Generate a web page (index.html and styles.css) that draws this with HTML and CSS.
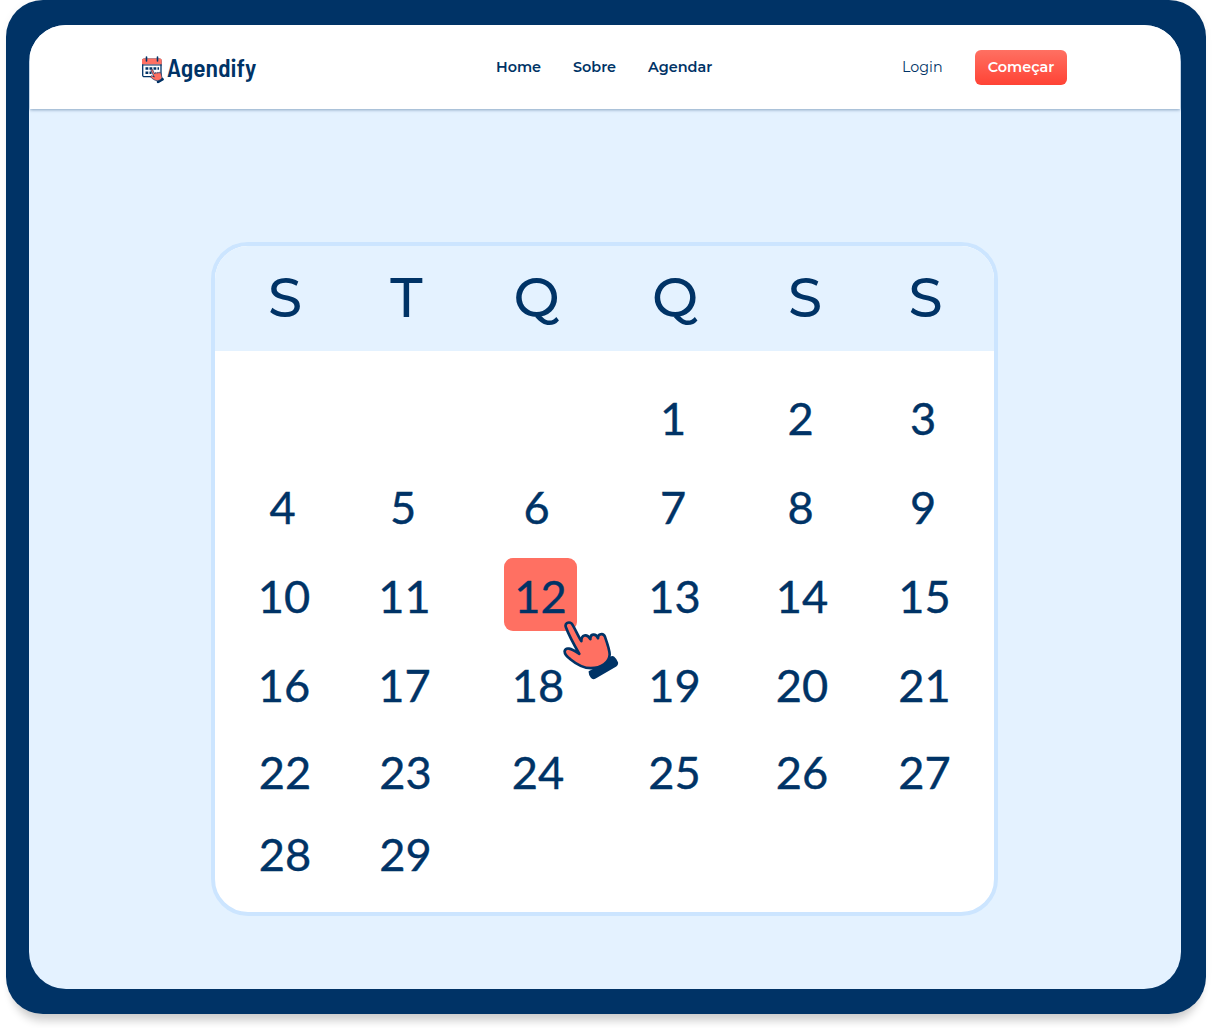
FILE: index.html
```html
<!DOCTYPE html>
<html lang="pt-BR">
<head>
<meta charset="utf-8">
<title>Agendify</title>
<link rel="stylesheet" href="styles.css">
</head>
<body>
<svg class="symbols" aria-hidden="true">
  <symbol id="hand" viewBox="220 228 168 176">
    <path d="M297 378Q333 362 361 335Q368 330 373 334Q381 341 385 351Q387 359 380 364L318 400Q309 405 303 397Q296 388 297 378Z" fill="#003366"/>
    <path d="M229 247C224 235 236 228 246 235C254 246 264 270 275 288C275 269 291 264 302 282C301 266 318 263 325 279C324 266 341 262 346 275C352 292 360 315 360 328C359 352 334 369 304 369C281 369 259 356 242 342C232 335 224 328 225 318C228 305 242 308 269 326C255 302 239 274 229 247Z" fill="#ff7062" stroke="#003366" stroke-width="8" stroke-linejoin="round"/>
  </symbol>
</svg>
<div class="frame">
  <div class="screen">
    <header class="topbar">
      <a class="brand">
        <svg class="brand-icon" viewBox="0 0 24 28">
          <rect x="1.7" y="3.2" width="18.3" height="17.5" rx="1.5" fill="#fff" stroke="#003366" stroke-width="1.3"/>
          <path d="M1 8.5V4Q1 2.5 2.5 2.5H19.2Q20.7 2.5 20.7 4V8.500Z" fill="#ff7062"/>
          <path d="M1 9H20.700" stroke="#003366"/>
          <path d="M5.500 1V5M16.500 1V5" stroke="#003366" stroke-width="1.600" stroke-linecap="round"/>
          <path d="M8.500 12.500H11.300M12.500 12.500H15.300M4.500 12.500H7.300M4.500 16.800H7.300M8.500 16.800H10.500M16.500 12.500H18" stroke="#003366" stroke-width="2.400"/>
          <use href="#hand" x="9" y="13" width="14.500" height="14.500"/>
        </svg>
        <span class="brand-name">Agendify</span>
      </a>
      <nav class="nav">
        <a class="home">Home</a><a class="about">Sobre</a><a class="book">Agendar</a>
      </nav>
      <div class="actions"><a class="login">Login</a><button class="start"><span>Começar</span></button></div>
    </header>
    <main class="content">
      <section class="calendar">
        <div class="weekdays"><span>S</span><span>T</span><span>Q</span><span>Q</span><span>S</span><span>S</span></div>
        <div class="days">
          <span></span><span></span><span></span><span class="single">1</span><span class="single">2</span><span class="single">3</span>
          <span class="single">4</span><span class="single">5</span><span class="single">6</span><span class="single">7</span><span class="single">8</span><span class="single">9</span>
          <span>10</span><span>11</span><span class="selected">12<svg class="pointer"><use href="#hand"/></svg></span><span>13</span><span>14</span><span>15</span>
          <span>16</span><span>17</span><span>18</span><span>19</span><span>20</span><span>21</span>
          <span class="late">22</span><span class="late">23</span><span>24</span><span>25</span><span>26</span><span>27</span>
          <span class="late">28</span><span class="late">29</span>
        </div>
      </section>
    </main>
  </div>
</div>
</body>
</html>
```
FILE: styles.css
```css
* { box-sizing: border-box; }
body { margin: 0; height: 1028px; overflow: hidden; background: #fff; color: #003366; font-family: Montserrat, Inter, sans-serif; }
.symbols { display: none; }
.frame { width: 1200px; height: 1014px; margin: 0 6px; padding: 25px 25px 25px 23px; border-radius: 37px; background: #003366; box-shadow: 0 13px 9px -6px rgba(0,0,0,.18), 0 0 8px rgba(0,0,0,.04); }
.screen { height: 964px; border-radius: 37px; overflow: hidden; background: #e4f2ff; }
.topbar { height: 84px; margin: 0 1px; display: flex; background: #fff; box-shadow: 0 1px 3px rgba(0,51,102,.4); }
.brand { display: flex; width: 466px; padding: 31px 0 0 111px; }
.brand-icon { width: 24px; height: 28px; flex: none; }
.brand-name { font: 600 25.4px/26px "Barlow Semi Condensed", Barlow, "Roboto Condensed", "Liberation Sans Narrow", sans-serif; margin: -2px 0 0 2px; height: 26px; }
.nav { width: 405px; display: flex; gap: 32px; padding-top: 33px; font-size: 14.4px; line-height: 18px; font-weight: 600; }
.home { width: 45px; }
.about { width: 43px; }
.book { width: 66px; }
.actions { display: flex; align-items: flex-start; padding-top: 25px; }
.login { width: 74px; padding: 8px 0 0 1px; font-size: 14.3px; line-height: 18px; font-weight: 400; }
.start { width: 92px; height: 35px; padding: 0; border: 0; border-radius: 6px; background: linear-gradient(#ff7062, #ff4335); color: #fff; font: 600 14.4px/35px Montserrat, Inter, sans-serif; }
.content { padding: 133px 0 0 182px; }
.calendar { width: 787px; height: 674px; border: 4px solid #cce5ff; border-radius: 37px; overflow: hidden; background: #fff; }
.weekdays, .days { display: grid; grid-template-columns: 120px 121px 146px 127px 128px 117px; text-align: center; }
.weekdays { grid-template-columns: 120px 123px 137px 140px 120px 121px; height: 105px; padding: 0 8px 0 10px; background: #e4f2ff; font: 500 55px/103px Montserrat, Lato, sans-serif; }
.days { padding: 22px 11px 0 9px; grid-template-rows: repeat(4, 89px) 85px 79px; font: 400 45.2px/89px Lato, sans-serif; -webkit-text-stroke: .4px #003366; }
.days > :nth-child(n+25) { line-height: 85px; }
.days > :nth-child(n+31) { line-height: 79px; }
.single { padding-right: 3px; }
.late { padding-left: 2px; }
.selected { position: relative; width: 73px; height: 73px; margin: 6.5px 0 0 39px; border-radius: 9px; background: #ff7062; line-height: 76px; }
.pointer { position: absolute; left: 59px; top: 63.5px; width: 56px; height: 59px; }
```
